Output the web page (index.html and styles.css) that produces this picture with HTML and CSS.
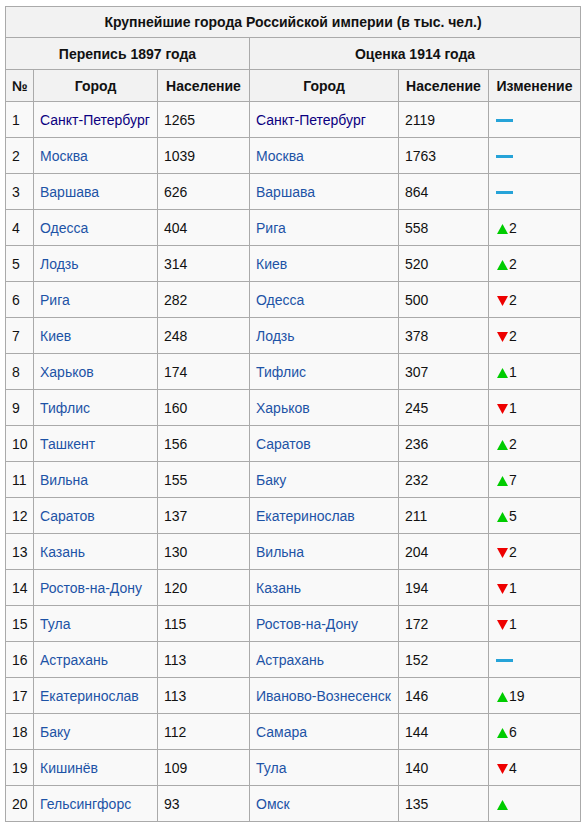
FILE: index.html
```html
<!DOCTYPE html>
<html lang="ru">
<head>
<meta charset="utf-8">
<link rel="stylesheet" href="styles.css">
</head>
<body>
<table class="wikitable">
<colgroup>
<col class="c-num"><col class="c-city1"><col class="c-pop1"><col class="c-city2"><col class="c-pop2"><col class="c-chg">
</colgroup>
<thead>
<tr class="h-title"><th colspan="6">Крупнейшие города Российской империи (в тыс. чел.)</th></tr>
<tr class="h-group"><th colspan="3">Перепись 1897 года</th><th colspan="3">Оценка 1914 года</th></tr>
<tr class="h-cols"><th>№</th><th>Город</th><th>Население</th><th>Город</th><th>Население</th><th>Изменение</th></tr>
</thead>
<tbody>
<tr><td>1</td><td><a class="visited">Санкт-Петербург</a></td><td>1265</td><td><a class="visited">Санкт-Петербург</a></td><td>2119</td><td><span class="steady"></span></td></tr>
<tr><td>2</td><td><a>Москва</a></td><td>1039</td><td><a>Москва</a></td><td>1763</td><td><span class="steady"></span></td></tr>
<tr><td>3</td><td><a>Варшава</a></td><td>626</td><td><a>Варшава</a></td><td>864</td><td><span class="steady"></span></td></tr>
<tr><td>4</td><td><a>Одесса</a></td><td>404</td><td><a>Рига</a></td><td>558</td><td><svg class="tri" width="11" height="10" viewBox="0 0 11 10"><polygon points="0,10 5.5,0 11,10" fill="#0c0"/></svg>2</td></tr>
<tr><td>5</td><td><a>Лодзь</a></td><td>314</td><td><a>Киев</a></td><td>520</td><td><svg class="tri" width="11" height="10" viewBox="0 0 11 10"><polygon points="0,10 5.5,0 11,10" fill="#0c0"/></svg>2</td></tr>
<tr><td>6</td><td><a>Рига</a></td><td>282</td><td><a>Одесса</a></td><td>500</td><td><svg class="tri" width="11" height="10" viewBox="0 0 11 10"><polygon points="0,0 11,0 5.5,10" fill="#e00"/></svg>2</td></tr>
<tr><td>7</td><td><a>Киев</a></td><td>248</td><td><a>Лодзь</a></td><td>378</td><td><svg class="tri" width="11" height="10" viewBox="0 0 11 10"><polygon points="0,0 11,0 5.5,10" fill="#e00"/></svg>2</td></tr>
<tr><td>8</td><td><a>Харьков</a></td><td>174</td><td><a>Тифлис</a></td><td>307</td><td><svg class="tri" width="11" height="10" viewBox="0 0 11 10"><polygon points="0,10 5.5,0 11,10" fill="#0c0"/></svg>1</td></tr>
<tr><td>9</td><td><a>Тифлис</a></td><td>160</td><td><a>Харьков</a></td><td>245</td><td><svg class="tri" width="11" height="10" viewBox="0 0 11 10"><polygon points="0,0 11,0 5.5,10" fill="#e00"/></svg>1</td></tr>
<tr><td>10</td><td><a>Ташкент</a></td><td>156</td><td><a>Саратов</a></td><td>236</td><td><svg class="tri" width="11" height="10" viewBox="0 0 11 10"><polygon points="0,10 5.5,0 11,10" fill="#0c0"/></svg>2</td></tr>
<tr><td>11</td><td><a>Вильна</a></td><td>155</td><td><a>Баку</a></td><td>232</td><td><svg class="tri" width="11" height="10" viewBox="0 0 11 10"><polygon points="0,10 5.5,0 11,10" fill="#0c0"/></svg>7</td></tr>
<tr><td>12</td><td><a>Саратов</a></td><td>137</td><td><a>Екатеринослав</a></td><td>211</td><td><svg class="tri" width="11" height="10" viewBox="0 0 11 10"><polygon points="0,10 5.5,0 11,10" fill="#0c0"/></svg>5</td></tr>
<tr><td>13</td><td><a>Казань</a></td><td>130</td><td><a>Вильна</a></td><td>204</td><td><svg class="tri" width="11" height="10" viewBox="0 0 11 10"><polygon points="0,0 11,0 5.5,10" fill="#e00"/></svg>2</td></tr>
<tr><td>14</td><td><a>Ростов-на-Дону</a></td><td>120</td><td><a>Казань</a></td><td>194</td><td><svg class="tri" width="11" height="10" viewBox="0 0 11 10"><polygon points="0,0 11,0 5.5,10" fill="#e00"/></svg>1</td></tr>
<tr><td>15</td><td><a>Тула</a></td><td>115</td><td><a>Ростов-на-Дону</a></td><td>172</td><td><svg class="tri" width="11" height="10" viewBox="0 0 11 10"><polygon points="0,0 11,0 5.5,10" fill="#e00"/></svg>1</td></tr>
<tr><td>16</td><td><a>Астрахань</a></td><td>113</td><td><a>Астрахань</a></td><td>152</td><td><span class="steady"></span></td></tr>
<tr><td>17</td><td><a>Екатеринослав</a></td><td>113</td><td><a>Иваново-Вознесенск</a></td><td>146</td><td><svg class="tri" width="11" height="10" viewBox="0 0 11 10"><polygon points="0,10 5.5,0 11,10" fill="#0c0"/></svg>19</td></tr>
<tr><td>18</td><td><a>Баку</a></td><td>112</td><td><a>Самара</a></td><td>144</td><td><svg class="tri" width="11" height="10" viewBox="0 0 11 10"><polygon points="0,10 5.5,0 11,10" fill="#0c0"/></svg>6</td></tr>
<tr><td>19</td><td><a>Кишинёв</a></td><td>109</td><td><a>Тула</a></td><td>140</td><td><svg class="tri" width="11" height="10" viewBox="0 0 11 10"><polygon points="0,0 11,0 5.5,10" fill="#e00"/></svg>4</td></tr>
<tr><td>20</td><td><a>Гельсингфорс</a></td><td>93</td><td><a>Омск</a></td><td>135</td><td><svg class="tri" width="11" height="10" viewBox="0 0 11 10"><polygon points="0,10 5.5,0 11,10" fill="#0c0"/></svg></td></tr>
</tbody>
</table>
</body>
</html>
```

FILE: styles.css
```css
html, body {
  margin: 0;
  padding: 0;
  background: #ffffff;
}

body {
  font-family: "Liberation Sans", Arial, sans-serif;
  font-size: 14px;
  color: #111111;
}

.wikitable {
  margin: 6px 0 0 5px;
  border-collapse: collapse;
  table-layout: fixed;
  width: 576px;
  background: #f9f9f9;
  border: 1px solid #aaaaaa;
}

.c-num { width: 28px; }
.c-city1 { width: 124px; }
.c-pop1 { width: 92px; }
.c-city2 { width: 149px; }
.c-pop2 { width: 90px; }
.c-chg { width: 92px; }

.wikitable th,
.wikitable td {
  border: 1px solid #aaaaaa;
  padding: 0 6px;
  white-space: nowrap;
  overflow: hidden;
}

.wikitable th {
  background: #f2f2f2;
  font-weight: bold;
  text-align: center;
  color: #111111;
}

.h-title th { height: 30px; }
.h-group th { height: 31px; }
.h-cols th { height: 31px; }

.wikitable td {
  height: 35px;
  text-align: left;
  vertical-align: middle;
  color: #111111;
}

.wikitable a {
  color: #1d53a6;
  text-decoration: none;
}

.wikitable a.visited {
  color: #0b0080;
}

.steady {
  display: inline-block;
  width: 17px;
  height: 3px;
  background: #26a3d8;
  vertical-align: middle;
  margin-left: 1px;
}

.tri {
  display: inline-block;
  vertical-align: -1px;
  margin-left: 2px;
  margin-right: 1px;
}
```
